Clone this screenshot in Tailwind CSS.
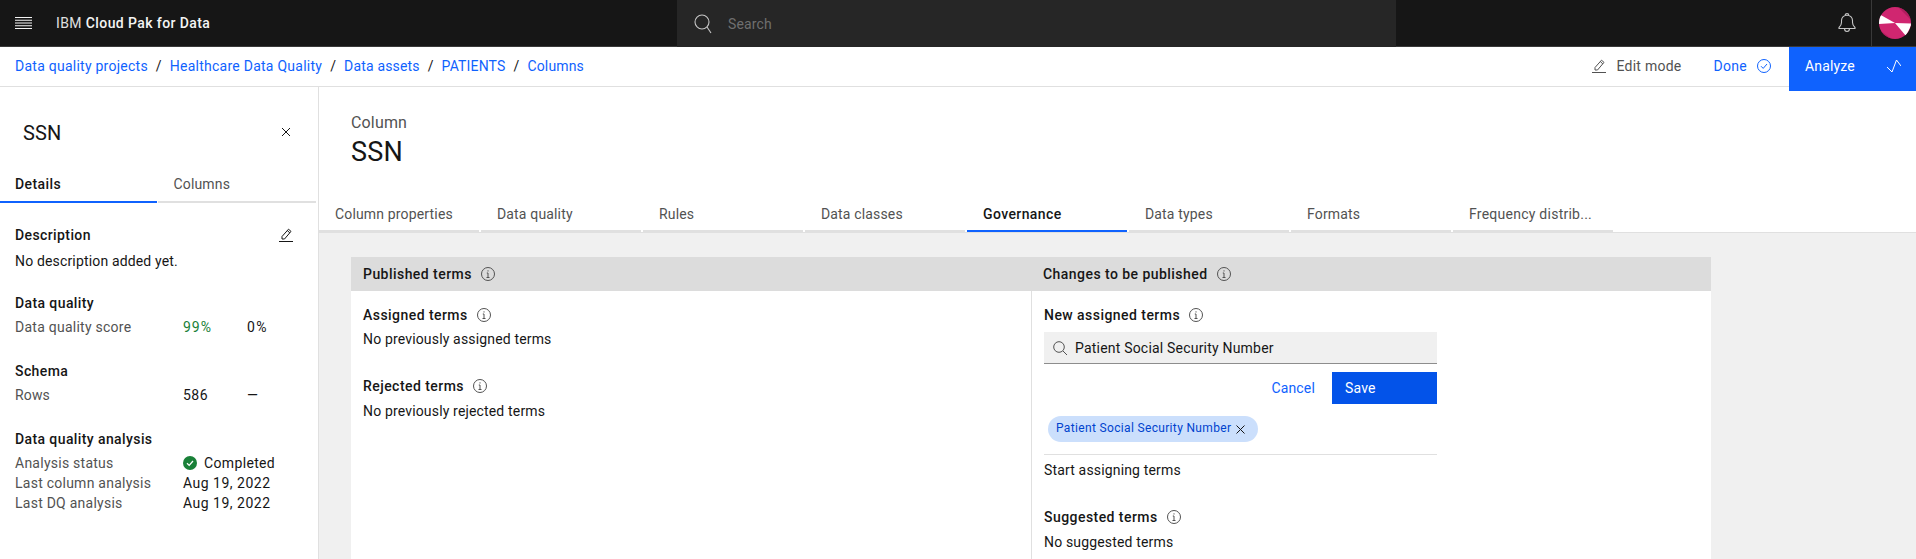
<!doctype html>
<html>
<head>
<meta charset="utf-8">
<script src="https://cdn.jsdelivr.net/npm/@tailwindcss/browser@4"></script>
</head>
<body class="bg-white">
<div class="w-[1916px] h-[559px] overflow-hidden flex flex-col font-['Roboto',sans-serif] text-[14px] leading-[18px] tracking-[0.16px] text-[#161616]">
  <header class="h-[47px] shrink-0 bg-[#161616] border-b border-[#393939] flex items-stretch text-white">
    <div class="w-[46px] flex items-center justify-center">
      <svg width="17" height="12" viewBox="0 0 17 12" fill="none" stroke="#f4f4f4" stroke-width="1"><path d="M0 .5h17M0 3.25h17M0 6h17M0 8.75h17M0 11.5h17"/></svg>
    </div>
    <div class="w-[631px] pl-[10px] flex items-center whitespace-nowrap tracking-[0.4px]"><span class="text-[#e0e0e0]">IBM&nbsp;</span><span class="font-medium text-[#f4f4f4]">Cloud Pak for Data</span></div>
    <div class="w-[719px] h-[47px] bg-[#262626] flex items-center pl-[17px] gap-[16px]">
      <svg width="18" height="20" viewBox="0 0 18 20" fill="none" stroke="#c6c6c6" stroke-width="1.1"><circle cx="8" cy="8" r="7"/><path d="M13 13l4 6"/></svg>
      <span class="text-[#6f6f6f]">Search</span>
    </div>
    <div class="flex-1 flex items-stretch justify-end">
      <div class="w-[47px] pr-[2px] flex items-center justify-center">
        <svg width="18" height="20" viewBox="0 0 18 20" fill="none" stroke="#c6c6c6" stroke-width="1.1"><path d="M1 14.5c1.8-1.6 2.5-2.8 2.5-5V7.5C3.500 4.500 6 2.200 9 2.200s5.500 2.300 5.500 5.300v2c0 2.200.7 3.400 2.500 5v1H1z"/><path d="M7.200 2.200C7.200 1 8 .6 9 .6s1.800.4 1.800 1.600M6.500 15.500c0 2 1 3 2.500 3s2.500-1 2.500-3"/></svg>
      </div>
      <div class="w-[45px] pl-[2px] border-l border-[#393939] flex items-center justify-center">
        <svg width="32" height="32" viewBox="0 0 32 32"><defs><clipPath id="c"><circle cx="16" cy="16" r="16"/></clipPath></defs><g clip-path="url(#c)"><rect width="32" height="32" fill="#d02670"/><path d="M0 7L16 16L-1 17z" fill="#fff"/><path d="M16 16L33 16.500L27 29z" fill="#fff"/><path d="M19 0L33 14V0z" fill="#9f1853" opacity=".6"/><path d="M2 24L14 33H2z" fill="#9f1853" opacity=".6"/></g></svg>
      </div>
    </div>
  </header>

  <div class="h-[40px] shrink-0 pb-[2px] border-b border-[#e0e0e0] flex items-center justify-between relative">
    <nav class="pl-[15px] flex items-center gap-[8px] text-[#0f62fe] whitespace-nowrap">
      <span class="tracking-[0.25px]">Data quality projects</span><span class="text-[#161616]">/</span>
      <span class="tracking-[0.25px]">Healthcare Data Quality</span><span class="text-[#161616]">/</span>
      <span>Data assets</span><span class="text-[#161616]">/</span>
      <span>PATIENTS</span><span class="text-[#161616]">/</span>
      <span>Columns</span>
    </nav>
    <div class="flex items-center h-full pr-[127px]">
      <svg class="mr-[10px]" width="14" height="14" viewBox="0 0 14 14" fill="none" stroke="#525252" stroke-width="1"><path d="M0 13.500h14M3 11V8.500L9.500 1.200 12 3.400 5.500 11zM8.300 2.600l2.500 2.200"/></svg>
      <span class="text-[#525252] mr-[32px] tracking-[0.25px]">Edit mode</span>
      <span class="text-[#0f62fe] mr-[10px] tracking-[0.3px]">Done</span>
      <svg class="mr-[18px]" width="14" height="14" viewBox="0 0 14 14" fill="none" stroke="#0f62fe" stroke-width="1"><circle cx="7" cy="7" r="6.500"/><path d="M4 7.200l2.200 2.200L10 5"/></svg>
    </div>
    <div class="absolute right-0 top-0 w-[127px] h-[44px] bg-[#0f62fe] text-white flex items-center pb-[6px] pl-[16px] justify-between pr-[15px]">
      <span>Analyze</span>
      <svg width="14" height="14" viewBox="0 0 14 14" fill="none" stroke="#fff" stroke-width="1"><path d="M0 8l5 5L9.500 1 14 7"/></svg>
    </div>
  </div>

  <div class="flex-1 flex min-h-0">
    <aside class="w-[319px] shrink-0 border-r border-[#e0e0e0] bg-white pr-[2px] flex flex-col">
      <div class="h-[73px] shrink-0 pl-[23px] pr-[25px] pt-[34px] flex items-start justify-between">
        <span class="text-[20px] leading-[24px]">SSN</span>
        <svg class="mt-[6px]" width="10" height="10" viewBox="0 0 10 10" fill="none" stroke="#161616" stroke-width="1"><path d="M1 1l8 8M9 1l-8 8"/></svg>
      </div>
      <div class="h-[43px] shrink-0 flex">
        <div class="w-[157px] border-b-2 border-[#0f62fe] pl-[15px] pt-[15px] font-medium tracking-[0.4px]">Details</div>
        <div class="w-[159px] ml-[1px] border-b-2 border-[#e0e0e0] pl-[16px] pt-[15px] text-[#525252]">Columns</div>
      </div>
      <div class="pl-[15px] pr-[23px] pt-[23px]">
        <div class="flex justify-between items-center"><span class="font-medium tracking-[0.4px]">Description</span>
          <svg width="14" height="14" viewBox="0 0 14 14" fill="none" stroke="#161616" stroke-width="1"><path d="M0 13.500h14M3 11V8.500L9.500 1.200 12 3.400 5.500 11zM8.300 2.600l2.500 2.200"/></svg>
        </div>
        <div class="mt-[8px]">No description added yet.</div>
        <div class="mt-[24px] font-medium tracking-[0.4px]">Data quality</div>
        <div class="mt-[6px] flex"><span class="w-[168px] text-[#525252] tracking-[0.25px]">Data quality score</span><span class="w-[64px] text-[#198038] tracking-[1px]">99%</span><span class="tracking-[1.5px]">0%</span></div>
        <div class="mt-[26px] font-medium tracking-[0.4px]">Schema</div>
        <div class="mt-[6px] flex"><span class="w-[168px] text-[#525252]">Rows</span><span class="w-[64px] tracking-[0.5px]">586</span><span>—</span></div>
        <div class="mt-[26px] font-medium tracking-[0.4px]">Data quality analysis</div>
        <div class="mt-[6px] flex"><span class="w-[168px] text-[#525252] tracking-[0.25px]">Analysis status</span>
          <span class="flex items-center gap-[7px] tracking-[0.35px]"><svg width="14" height="14" viewBox="0 0 14 14"><circle cx="7" cy="7" r="7" fill="#198038"/><path d="M4 7.200l2.200 2.200L10 5" fill="none" stroke="#fff" stroke-width="1.300"/></svg>Completed</span></div>
        <div class="mt-[2px] flex"><span class="w-[168px] text-[#525252] tracking-[0.25px]">Last column analysis</span><span class="tracking-[0.5px]">Aug 19, 2022</span></div>
        <div class="mt-[2px] flex"><span class="w-[168px] text-[#525252] tracking-[0.25px]">Last DQ analysis</span><span class="tracking-[0.5px]">Aug 19, 2022</span></div>
      </div>
    </aside>

    <main class="flex-1 min-w-0 flex flex-col">
      <div class="h-[145px] shrink-0 flex flex-col">
        <div class="pl-[32px] pt-[26px] flex-1">
          <div class="text-[#525252] text-[16px] leading-[20px]">Column</div>
          <div class="text-[27px] leading-[36px] mt-[1px]">SSN</div>
        </div>
        <div class="flex h-[42px] shrink-0 gap-[2px] whitespace-nowrap text-[#525252]">
          <div class="w-[160px] border-b-[2px] border-[#e0e0e0] pl-[16px] pt-[15px]">Column properties</div>
          <div class="w-[160px] border-b-[2px] border-[#e0e0e0] pl-[16px] pt-[15px]">Data quality</div>
          <div class="w-[160px] border-b-[2px] border-[#e0e0e0] pl-[16px] pt-[15px]">Rules</div>
          <div class="w-[160px] border-b-[2px] border-[#e0e0e0] pl-[16px] pt-[15px]">Data classes</div>
          <div class="w-[160px] border-b-[2px] border-[#0f62fe] pl-[16px] pt-[15px] font-medium tracking-[0.4px] text-[#161616]">Governance</div>
          <div class="w-[160px] border-b-[2px] border-[#e0e0e0] pl-[16px] pt-[15px]">Data types</div>
          <div class="w-[160px] border-b-[2px] border-[#e0e0e0] pl-[16px] pt-[15px]">Formats</div>
          <div class="w-[160px] border-b-[2px] border-[#e0e0e0] pl-[16px] pt-[15px] tracking-[0.25px]">Frequency distrib...</div>
        </div>
      </div>
      <div class="flex-1 bg-[#f0f0f0] border-t border-[#e0e0e0] pt-[24px] pl-[32px]">
        <div class="w-[1360px] bg-white h-[400px]">
          <div class="h-[34px] bg-[#dcdcdc] flex font-medium tracking-[0.45px] items-center">
            <div class="w-[680px] pl-[12px] flex items-center gap-[9px]">Published terms
              <svg width="14" height="14" viewBox="0 0 14 14" fill="none" stroke="#525252" stroke-width="1"><circle cx="7" cy="7" r="6.500"/><path d="M5.500 10.500h3M7 10.500V6H5.800M7 3.300v1.200"/></svg>
            </div>
            <div class="pl-[12px] flex items-center gap-[9px]">Changes to be published
              <svg width="14" height="14" viewBox="0 0 14 14" fill="none" stroke="#525252" stroke-width="1"><circle cx="7" cy="7" r="6.500"/><path d="M5.500 10.500h3M7 10.500V6H5.800M7 3.300v1.200"/></svg>
            </div>
          </div>
          <div class="flex h-[366px]">
            <div class="w-[680px] pl-[12px] pt-[15px]">
              <div class="font-medium tracking-[0.45px] flex items-center gap-[9px]">Assigned terms
                <svg width="14" height="14" viewBox="0 0 14 14" fill="none" stroke="#525252" stroke-width="1"><circle cx="7" cy="7" r="6.500"/><path d="M5.500 10.500h3M7 10.500V6H5.800M7 3.300v1.200"/></svg>
              </div>
              <div class="mt-[6px]">No previously assigned terms</div>
              <div class="mt-[29px] font-medium tracking-[0.45px] flex items-center gap-[9px]">Rejected terms
                <svg width="14" height="14" viewBox="0 0 14 14" fill="none" stroke="#525252" stroke-width="1"><circle cx="7" cy="7" r="6.500"/><path d="M5.500 10.500h3M7 10.500V6H5.800M7 3.300v1.200"/></svg>
              </div>
              <div class="mt-[7px]">No previously rejected terms</div>
            </div>
            <div class="border-l border-[#e0e0e0] pl-[12px] pt-[15px] w-[406px]">
              <div class="font-medium tracking-[0.45px] flex items-center gap-[9px]">New assigned terms
                <svg width="14" height="14" viewBox="0 0 14 14" fill="none" stroke="#525252" stroke-width="1"><circle cx="7" cy="7" r="6.500"/><path d="M5.500 10.500h3M7 10.500V6H5.800M7 3.300v1.200"/></svg>
              </div>
              <div class="mt-[8px] h-[32px] w-[393px] bg-[#f0f0f0] border-b border-[#8d8d8d] flex items-center pl-[9px] gap-[8px] tracking-[0.2px]">
                <svg width="14" height="14" viewBox="0 0 14 14" fill="none" stroke="#525252" stroke-width="1"><circle cx="6" cy="6" r="5.300"/><path d="M10 10l4 4"/></svg>
                Patient Social Security Number
              </div>
              <div class="mt-[8px] w-[393px] h-[32px] flex justify-end items-center">
                <span class="text-[#0f62fe] mr-[17px]">Cancel</span>
                <div class="w-[105px] h-[32px] bg-[#0353e9] text-white flex items-center pl-[13px]">Save</div>
              </div>
              <div class="mt-[12px] ml-[4px] w-[210px] h-[26px] pb-[2px] rounded-full bg-[#cbdffc] text-[#0043ce] text-[12px] tracking-[0.34px] flex items-center pl-[8px] gap-[5px] whitespace-nowrap">Patient Social Security Number
                <svg class="mt-[2px]" width="9" height="9" viewBox="0 0 9 9" fill="none" stroke="#161616" stroke-width="1"><path d="M.5.500l8 8M8.500.500l-8 8"/></svg>
              </div>
              <div class="mt-[12px] w-[393px] border-t border-[#e0e0e0]"></div>
              <div class="mt-[6px]">Start assigning terms</div>
              <div class="mt-[29px] font-medium tracking-[0.45px] flex items-center gap-[9px]">Suggested terms
                <svg width="14" height="14" viewBox="0 0 14 14" fill="none" stroke="#525252" stroke-width="1"><circle cx="7" cy="7" r="6.500"/><path d="M5.500 10.500h3M7 10.500V6H5.800M7 3.300v1.200"/></svg>
              </div>
              <div class="mt-[7px]">No suggested terms</div>
            </div>
          </div>
        </div>
      </div>
    </main>
  </div>
</div>
</body>
</html>
